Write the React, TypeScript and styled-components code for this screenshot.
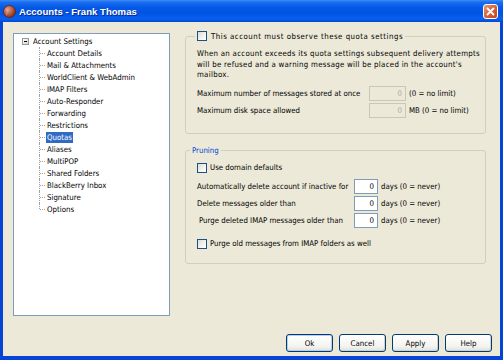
import React from 'react';
import styled, { createGlobalStyle } from 'styled-components';

const GlobalStyle = createGlobalStyle`
  html, body {
    margin: 0;
    padding: 0;
    background: #fff;
  }
  body {
    font-family: "Liberation Sans", Arial, sans-serif;
  }
`;

const Window = styled.div`
  width: 503px;
  height: 360px;
  display: flex;
  flex-direction: column;
  background: #0843d8;
  overflow: hidden;
`;

const TitleBar = styled.div`
  height: 22px;
  flex: none;
  display: flex;
  align-items: center;
  padding: 0 5px 0 3px;
  background: linear-gradient(
    to bottom,
    #3d8ef5 0%,
    #1a6ef0 10%,
    #0458e6 35%,
    #0054e3 60%,
    #0a5ff0 85%,
    #0049d6 100%
  );
`;

const TitleText = styled.span`
  margin-left: 3px;
  color: #fff;
  font-size: 9.6px;
  font-weight: bold;
  text-shadow: 1px 1px 0 #0a2a8a;
`;

const CloseButton = styled.div`
  margin-left: auto;
  width: 15px;
  height: 15px;
  box-sizing: border-box;
  border: 1px solid #fff;
  border-radius: 3px;
  background: linear-gradient(135deg, #e99a7c 0%, #d9673f 45%, #c4421c 100%);
  display: flex;
  align-items: center;
  justify-content: center;
`;

const Body = styled.div`
  flex: 1;
  margin: 0 3px 4px;
  background: #ece9d8;
  padding: 8px 8px 4px 10px;
  display: flex;
  flex-direction: column;
  font-family: "DejaVu Sans Condensed", "DejaVu Sans", "Liberation Sans", sans-serif;
  font-stretch: condensed;
  font-size: 7.8px;
  color: #000;
`;

const Main = styled.div`
  display: flex;
  gap: 15px;
  height: 286px;
`;

const Tree = styled.div`
  margin-top: 3px;
  width: 157px;
  height: 283px;
  box-sizing: border-box;
  border: 1px solid #7f9db9;
  background: #fff;
  padding: 1px 0 0 8px;
`;

const RootRow = styled.div`
  display: flex;
  align-items: center;
  height: 12px;
`;

const Expander = styled.span`
  width: 7px;
  height: 7px;
  box-sizing: border-box;
  border: 1px solid #919b9c;
  background: linear-gradient(135deg, #fff, #d8d4c6);
  margin-right: 4px;
  display: flex;
  align-items: center;
  justify-content: center;

  &::before {
    content: '';
    width: 3px;
    height: 1px;
    background: #000;
  }
`;

const Branch = styled.ul`
  list-style: none;
  margin: 0 0 0 17px;
  padding: 0;
`;

const Leaf = styled.li`
  position: relative;
  height: 12px;
  line-height: 12px;
  padding-left: 7px;
  display: flex;
  align-items: center;

  &::before {
    content: '';
    position: absolute;
    left: 0;
    top: 0;
    bottom: 0;
    border-left: 1px dotted #a0a0a0;
  }
  &:last-child::before {
    bottom: 6px;
  }
  &::after {
    content: '';
    position: absolute;
    left: 1px;
    top: 6px;
    width: 5px;
    border-top: 1px dotted #a0a0a0;
  }
`;

const LeafLabel = styled.span<{ $selected?: boolean }>`
  padding: 0 1px;
  height: 11px;
  line-height: 11px;
  background: ${p => (p.$selected ? '#316ac5' : 'transparent')};
  color: ${p => (p.$selected ? '#fff' : '#000')};
`;

const RightCol = styled.div`
  width: 301px;
  margin-right: 6px;
  display: flex;
  flex-direction: column;
`;

const Group = styled.fieldset<{ $top: number; $bottom: number }>`
  margin: ${p => p.$top}px 0 0;
  border: 1px solid #d0d0bf;
  border-radius: 3px;
  padding: 0 11px ${p => p.$bottom}px;
  min-width: 0;
`;

const Legend = styled.legend<{ $offset: number; $height: number; $spacing?: number; $blue?: boolean }>`
  margin-left: ${p => p.$offset}px;
  padding: 0 2px;
  height: ${p => p.$height}px;
  display: flex;
  align-items: center;
  gap: 4px;
  letter-spacing: ${p => p.$spacing || 0}px;
  color: ${p => (p.$blue ? '#0046d5' : '#000')};
`;

const Check = styled.span`
  width: 10px;
  height: 10px;
  flex: none;
  box-sizing: border-box;
  border: 1px solid #1c5180;
  background: linear-gradient(135deg, #dcdcd7 0%, #f4f4f0 60%, #fff 100%);
`;

const CheckRow = styled.div<{ $top: number }>`
  margin-top: ${p => p.$top}px;
  height: 12px;
  display: flex;
  align-items: center;
  gap: 3px;
`;

const Para = styled.p`
  margin: 7px 0 0;
  line-height: 10.5px;
  letter-spacing: 0.28px;
  white-space: nowrap;
`;

const Rows = styled.div`
  margin-top: 5px;
  display: flex;
  flex-direction: column;
  gap: 2px;
`;

const Row = styled.div`
  display: flex;
  align-items: center;
  height: 15px;
`;

const RowLabel = styled.span<{ $w: number; $indent?: number }>`
  width: ${p => p.$w - (p.$indent || 0)}px;
  padding-left: ${p => p.$indent || 0}px;
  flex: none;
  white-space: nowrap;
`;

const Field = styled.input<{ $w: number }>`
  width: ${p => p.$w}px;
  height: 15px;
  box-sizing: border-box;
  margin: 0;
  padding: 0 3px 0 0;
  border: 1px solid #7f9db9;
  background: #fff;
  color: #000;
  font: inherit;
  text-align: right;
  outline: none;

  &:disabled {
    border-color: #c9c7ba;
    background: #ece9d8;
    color: #aca899;
    -webkit-text-fill-color: #aca899;
  }
`;

const Suffix = styled.span`
  margin-left: 3px;
  white-space: nowrap;
`;

const ButtonRow = styled.div`
  margin-top: 18px;
  display: flex;
  justify-content: flex-end;
  gap: 6px;
`;

const Button = styled.button<{ $default?: boolean }>`
  width: 47px;
  height: 18px;
  padding: 0;
  border: 1px solid #003c74;
  border-radius: 3px;
  background: linear-gradient(to bottom, #ffffff 0%, #f4f4f0 70%, #e3e0d6 100%);
  box-shadow: ${p => (p.$default ? 'inset 0 0 0 1px #b8cdf0' : 'inset -1px -1px 0 #d6d0c5')};
  font: inherit;
  color: #000;
`;

const treeItems = [
  'Account Details',
  'Mail & Attachments',
  'WorldClient & WebAdmin',
  'IMAP Filters',
  'Auto-Responder',
  'Forwarding',
  'Restrictions',
  'Quotas',
  'Aliases',
  'MultiPOP',
  'Shared Folders',
  'BlackBerry Inbox',
  'Signature',
  'Options',
];

const AppIcon = () => (
  <svg width="13" height="13" viewBox="0 0 13 13">
    <defs>
      <radialGradient id="ball" cx="0.35" cy="0.35" r="0.7">
        <stop offset="0" stopColor="#e2a38c" />
        <stop offset="0.6" stopColor="#b4573c" />
        <stop offset="1" stopColor="#7a2e1c" />
      </radialGradient>
    </defs>
    <circle cx="6.5" cy="6.5" r="6" fill="url(#ball)" stroke="#5a2414" strokeWidth="0.8" />
    <path d="M3 3.5 Q6 6.5 3.5 10" fill="none" stroke="#f0d0c0" strokeWidth="0.6" opacity="0.6" />
  </svg>
);

const CloseIcon = () => (
  <svg width="9" height="9" viewBox="0 0 9 9">
    <path d="M1.5 1.5 L7.5 7.5 M7.5 1.5 L1.5 7.5" stroke="#fff" strokeWidth="1.8" strokeLinecap="round" />
  </svg>
);

const pruneRows = [
  { label: 'Automatically delete account if inactive for', indent: 0 },
  { label: 'Delete messages older than', indent: 0 },
  { label: 'Purge deleted IMAP messages older than', indent: 2 },
];

export default function App() {
  return (
    <>
      <GlobalStyle />
      <Window>
        <TitleBar>
          <AppIcon />
          <TitleText>Accounts - Frank Thomas</TitleText>
          <CloseButton>
            <CloseIcon />
          </CloseButton>
        </TitleBar>
        <Body>
          <Main>
            <Tree>
              <RootRow>
                <Expander />
                <span>Account Settings</span>
              </RootRow>
              <Branch>
                {treeItems.map(item => (
                  <Leaf key={item}>
                    <LeafLabel $selected={item === 'Quotas'}>{item}</LeafLabel>
                  </Leaf>
                ))}
              </Branch>
            </Tree>
            <RightCol>
              <Group $top={0} $bottom={15}>
                <Legend $offset={-2} $height={12} $spacing={0.5}>
                  <Check />
                  <span>This account must observe these quota settings</span>
                </Legend>
                <Para>
                  When an account exceeds its quota settings subsequent delivery attempts
                  <br />
                  will be refused and a warning message will be placed in the account's
                  <br />
                  mailbox.
                </Para>
                <Rows>
                  <Row>
                    <RowLabel $w={172}>Maximum number of messages stored at once</RowLabel>
                    <Field $w={37} value="0" disabled readOnly />
                    <Suffix>(0 = no limit)</Suffix>
                  </Row>
                  <Row>
                    <RowLabel $w={172}>Maximum disk space allowed</RowLabel>
                    <Field $w={37} value="0" disabled readOnly />
                    <Suffix>MB (0 = no limit)</Suffix>
                  </Row>
                </Rows>
              </Group>
              <Group $top={12} $bottom={13}>
                <Legend $offset={-7} $height={10} $blue>
                  Pruning
                </Legend>
                <CheckRow $top={6}>
                  <Check />
                  <span>Use domain defaults</span>
                </CheckRow>
                <Rows>
                  {pruneRows.map(r => (
                    <Row key={r.label}>
                      <RowLabel $w={157} $indent={r.indent}>
                        {r.label}
                      </RowLabel>
                      <Field $w={24} value="0" readOnly />
                      <Suffix>days (0 = never)</Suffix>
                    </Row>
                  ))}
                </Rows>
                <CheckRow $top={10}>
                  <Check />
                  <span>Purge old messages from IMAP folders as well</span>
                </CheckRow>
              </Group>
            </RightCol>
          </Main>
          <ButtonRow>
            <Button $default>Ok</Button>
            <Button>Cancel</Button>
            <Button>Apply</Button>
            <Button>Help</Button>
          </ButtonRow>
        </Body>
      </Window>
    </>
  );
}
